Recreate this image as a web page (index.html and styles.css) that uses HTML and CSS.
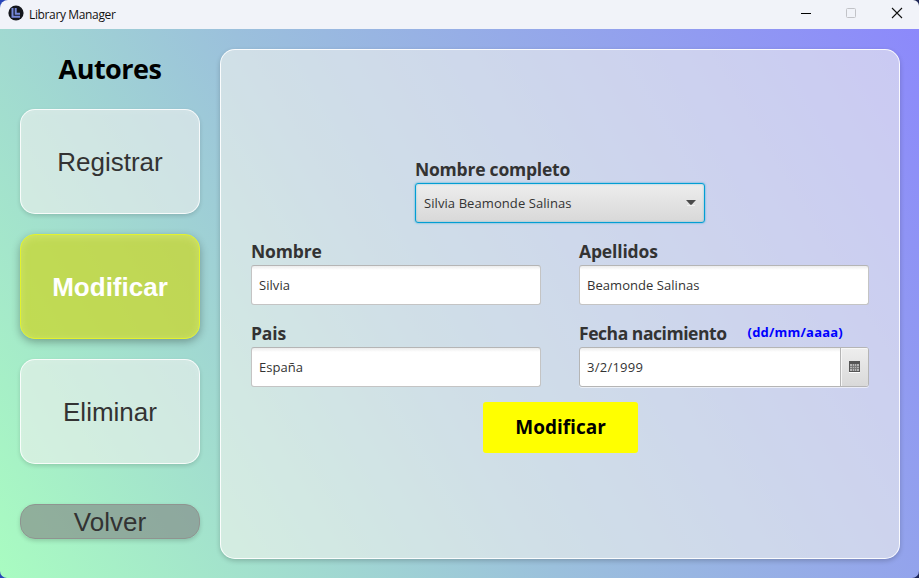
FILE: index.html
```html
<!DOCTYPE html>
<html lang="es">
<head>
<meta charset="utf-8">
<title>Library Manager</title>
<link rel="stylesheet" href="styles.css">
</head>
<body>
<div class="window">
  <header class="titlebar">
    <svg class="app-icon" width="16" height="16" viewBox="0 0 16 16"><circle cx="8" cy="8" r="7.6" fill="#15171d"/><path d="M4.5 3v8.700H12M7.700 3v5.700H12" fill="none" stroke="#7587d9" stroke-width="2"/></svg>
    <span class="app-name">Library Manager</span>
    <div class="controls">
      <svg width="46" height="28" viewBox="0 0 46 28"><path d="M19 13.5h10" stroke="#000"/></svg>
      <svg width="46" height="28" viewBox="0 0 46 28"><rect x="18.5" y="8.500" width="9" height="9" rx="1" fill="none" stroke="#c2c3c8"/></svg>
      <svg width="46" height="28" viewBox="0 0 46 28"><path d="M18 8l10 10M28 8L18 18" stroke="#111" stroke-width="1.1"/></svg>
    </div>
  </header>
  <main class="content">
    <nav class="sidebar">
      <h1 class="title">Autores</h1>
      <button class="nav-button">Registrar</button>
      <button class="nav-button active">Modificar</button>
      <button class="nav-button">Eliminar</button>
      <button class="back-button">Volver</button>
    </nav>
    <section class="panel">
      <div class="field full">
        <label class="label-full">Nombre completo</label>
        <div class="combo"><span class="value">Silvia Beamonde Salinas</span><svg width="10" height="6" viewBox="0 0 10 6"><path d="M1 5.500h8" stroke="#fff" opacity=".6"/><path d="M0 0h10L5.600 4.700H4.400z" fill="#4b4b4b"/></svg></div>
      </div>
      <div class="grid">
        <div class="field">
          <label>Nombre</label>
          <div class="input"><span class="value">Silvia</span></div>
        </div>
        <div class="field">
          <label>Apellidos</label>
          <div class="input"><span class="value">Beamonde Salinas</span></div>
        </div>
        <div class="field">
          <label>Pais</label>
          <div class="input"><span class="value">España</span></div>
        </div>
        <div class="field">
          <div class="label-row"><label class="label-date">Fecha nacimiento</label><span class="hint">(dd/mm/aaaa)</span></div>
          <div class="input date"><span class="value">3/2/1999</span><div class="picker"><svg width="11" height="12" viewBox="0 0 11 12"><path d="M0 11.500h11" stroke="#fff"/><path d="M0 0h11v11H0z" fill="#555"/><path d="M1 3h9v7H1z" fill="#b4b4b4"/><path d="M3.500 3v7M5.500 3v7M7.500 3v7M1 5.500h9M1 7.500h9" stroke="#777" stroke-width=".9"/></svg></div></div>
        </div>
      </div>
      <button class="submit">Modificar</button>
    </section>
  </main>
</div>
</body>
</html>
```
FILE: styles.css
```css
* { box-sizing: border-box; }
body { margin: 0; background: linear-gradient(90deg, #2846b8, #1d2555); font-family: "Open Sans", sans-serif; }
button { font: inherit; padding: 0; }
svg { display: block; flex: none; }
.window { width: 919px; height: 578px; border-radius: 8px 6px 7px 7px; overflow: hidden; display: flex; flex-direction: column; }
.titlebar { height: 29px; flex: none; background: #f1f3f9; display: flex; align-items: center; padding-left: 8px; }
.titlebar .app-icon { margin-top: -3px; }
.app-name { font-size: 12px; color: #111; margin-left: 5px; line-height: 29px; letter-spacing: -0.36px; height: 29px; }
.controls { margin-left: auto; display: flex; height: 29px; }
.controls svg:last-child { margin-right: -1px; }
.content {
  flex: 1; display: flex; gap: 20px; padding: 20px 19px 19px 20px;
  background: linear-gradient(59.15deg, #a9fcc1 0%, #9bc0dc 45%, #8c89fb 100%);
}
.sidebar { width: 180px; flex: none; display: flex; flex-direction: column; }
.title { margin: 0; height: 60px; font-size: 27px; line-height: 40px; font-weight: 700; color: #000; text-align: center; letter-spacing: -0.5px; }
.nav-button, .back-button {
  font-family: "Liberation Sans", Arial, sans-serif; font-size: 26px; color: #333; border-radius: 15px;
}
.nav-button {
  height: 105px; margin-bottom: 20px; border: 1px solid rgba(255,255,255,.85); padding-top: 1px;
  background: rgba(240,240,238,.6);
  box-shadow: 0 2px 4px rgba(0,0,0,.14), inset 0 2px 6px rgba(255,255,255,.08);
}
.nav-button.active {
  font-weight: 700; color: #fff; border-color: #e3f22d; background: rgba(203,214,42,.74);
  box-shadow: 0 3px 8px rgba(0,0,0,.3), inset 0 2px 8px rgba(230,245,140,.4);
}
.back-button {
  height: 35px; margin-top: 20px; line-height: 33px; padding-top: 1px; border: 1px solid #8f9490; background: rgba(128,128,128,.6);
  box-shadow: 0 2px 4px rgba(0,0,0,.16);
}
.panel {
  flex: 1; border: 1px solid rgba(255,255,255,.9); border-radius: 15px; background: rgba(243,243,238,.6);
  box-shadow: 0 2px 5px rgba(0,0,0,.2); padding: 109px 30px 0;
  display: flex; flex-direction: column; align-items: center;
}
.field { display: flex; flex-direction: column; width: 290px; }
.field label { font-size: 17.500px; line-height: 20px; height: 24px; font-weight: 700; color: #333; white-space: nowrap; letter-spacing: -0.15px; }
.field .label-full { letter-spacing: -0.22px; }
.field .label-date { letter-spacing: -0.45px; }
.full { margin-bottom: 18px; }
.combo, .input { height: 40px; border-radius: 3px; display: flex; align-items: center; }
.combo {
  border: 1px solid #039ed3; padding: 0 8px; justify-content: space-between;
  background: linear-gradient(#ededed, #d8d8d8);
  box-shadow: 0 0 2px rgba(3,158,211,.8), inset 0 0 2px rgba(3,158,211,.5);
}
.combo .value { letter-spacing: 0.08px; }
.input { background: linear-gradient(#ececec, #fff 4px); border: 1px solid #c4c4c4; border-top-color: #b5b5b5; padding-left: 7px; }
.value { font-size: 13px; color: #333; white-space: nowrap; letter-spacing: 0.05px; }
.date .value { letter-spacing: 0.25px; }
.grid { display: grid; grid-template-columns: 290px 290px; column-gap: 38px; row-gap: 18px; }
.label-row { display: flex; height: 24px; }
.hint { font-size: 13px; font-weight: 700; color: #00f; margin-left: 21px; line-height: 19px; letter-spacing: 0.2px; }
.date { box-shadow: 0 1px 0 rgba(255,255,255,.6); border-color: #b5b5b5; justify-content: space-between; }
.picker {
  width: 28px; height: 38px; border-left: 1px solid #b5b5b5; border-radius: 0 2px 2px 0; display: flex; align-items: center; justify-content: center;
  background: linear-gradient(#eee, #d9d9d9); box-shadow: inset 1px 1px 0 #f7f7f7;
}
.submit { width: 155px; height: 51px; margin: 15px 0 0 1px; padding-bottom: 2px; background: #ff0; border: 0; border-radius: 3px; font-size: 19px; font-weight: 700; color: #000; }
```
